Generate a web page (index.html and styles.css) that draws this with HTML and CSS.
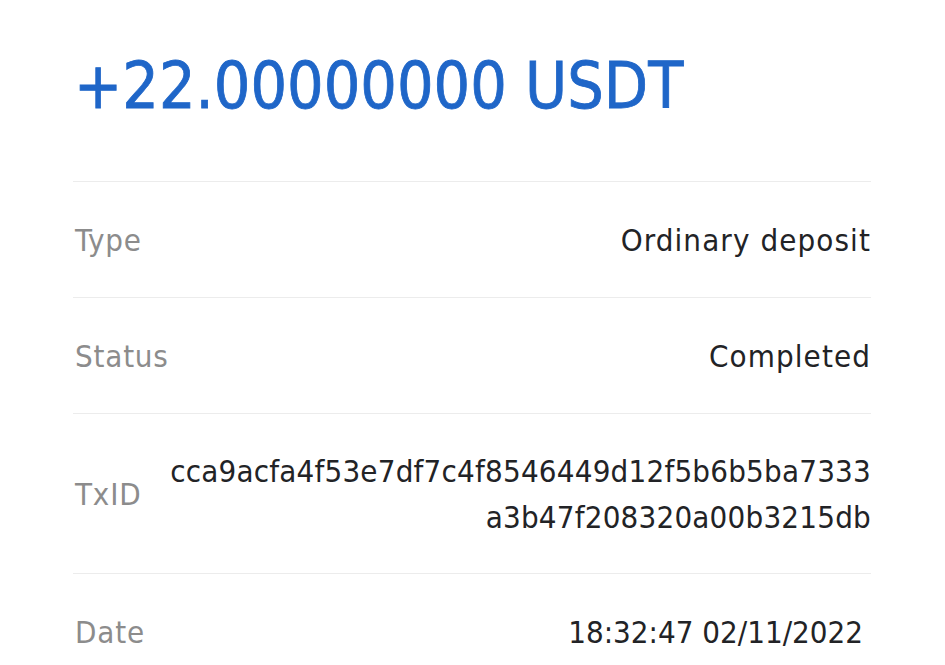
FILE: index.html
```html
<!DOCTYPE html>
<html>
<head>
<meta charset="utf-8">
<link rel="stylesheet" href="styles.css">
</head>
<body>
<main class="detail">
  <h1 class="amount">+22.00000000 USDT</h1>
  <div class="row">
    <span class="label">Type</span>
    <span class="value word">Ordinary deposit</span>
  </div>
  <div class="row">
    <span class="label">Status</span>
    <span class="value word">Completed</span>
  </div>
  <div class="row row-tall">
    <span class="label">TxID</span>
    <span class="value hash">cca9acfa4f53e7df7c4f8546449d12f5b6b5ba7333<br>a3b47f208320a00b3215db</span>
  </div>
  <div class="row">
    <span class="label">Date</span>
    <span class="value date">18:32:47 02/11/2022</span>
  </div>
</main>
</body>
</html>
```

FILE: styles.css
```css
html, body {
  margin: 0;
  padding: 0;
  background: #ffffff;
}

body {
  font-family: "DejaVu Sans", sans-serif;
  font-stretch: condensed;
}

.detail {
  width: 798px;
  margin-left: 73px;
}

.amount {
  margin: 0;
  height: 182px;
  display: flex;
  align-items: center;
  padding-left: 1px;
  padding-bottom: 10px;
  box-sizing: border-box;
  font-size: 64px;
  font-weight: 400;
  color: #1f66c8;
  -webkit-text-stroke: 0.8px #1f66c8;
  border-bottom: 1px solid #ececec;
}

.row {
  height: 116px;
  box-sizing: border-box;
  border-bottom: 1px solid #ececec;
  display: flex;
  align-items: center;
  justify-content: space-between;
  gap: 24px;
}

.row-tall {
  height: 160px;
}

.label {
  color: #8c8c8c;
  font-size: 31px;
  letter-spacing: 0.8px;
  padding-left: 2px;
}

.value {
  color: #222326;
  text-align: right;
  font-size: 31px;
  line-height: 46px;
}

.word {
  letter-spacing: 1.1px;
}

.hash {
  letter-spacing: 0.2px;
}

.date {
  margin-right: 8px;
}
```
